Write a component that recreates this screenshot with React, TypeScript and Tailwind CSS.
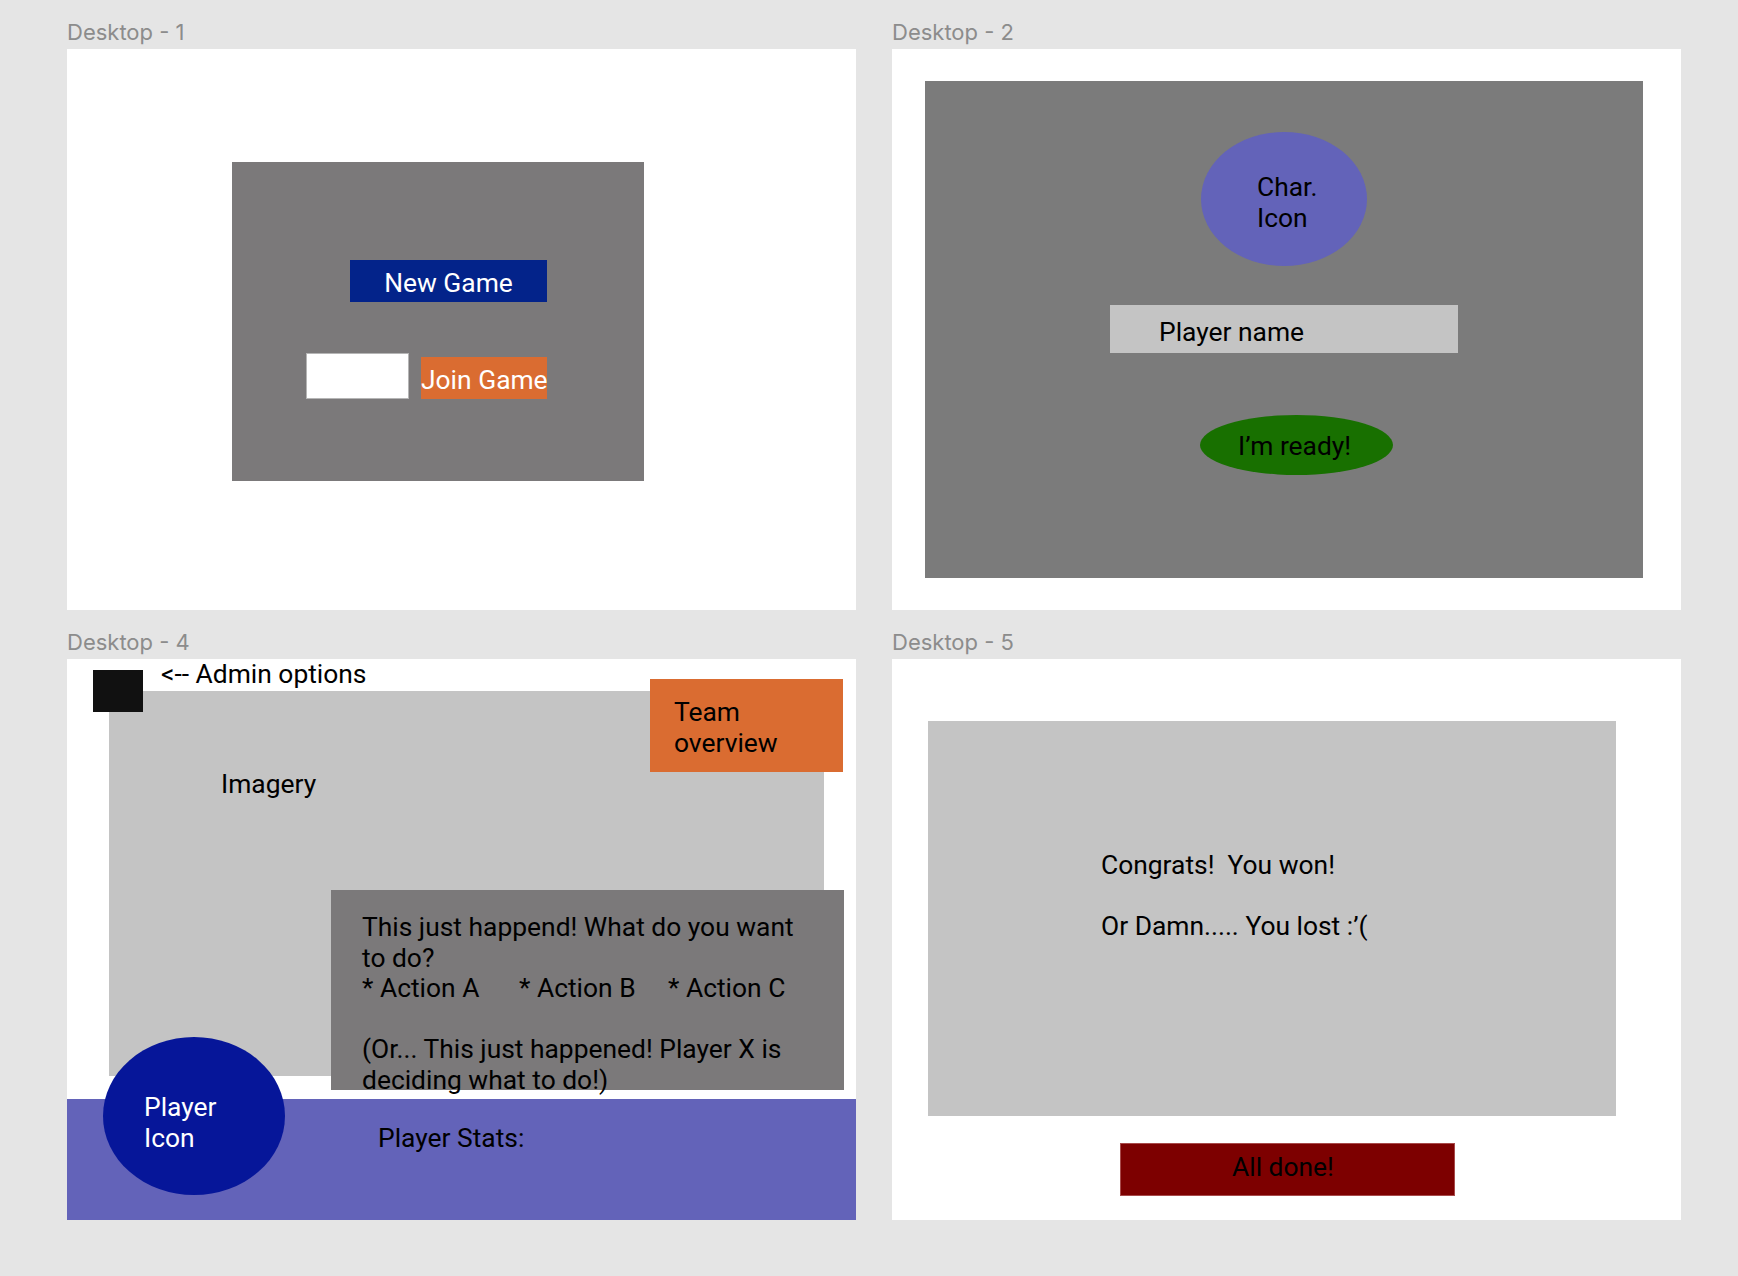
import React from "react";

const FrameLabel = ({ children }: { children: string }) => (
  <div className="h-[30px] text-[22px] leading-[26px] text-[#8c8c8c] [font-family:Inter,sans-serif]">
    {children}
  </div>
);

const StartScreen = () => (
  <div className="h-[561px] bg-white pl-[165px] pt-[113px]">
    <div className="flex h-[319px] w-[412px] flex-col bg-[#7b797a]">
      <div className="ml-[118px] mt-[98px] flex h-[42px] w-[197px] items-center justify-center bg-[#03238a] pt-[4px] text-white">
        New Game
      </div>
      <div className="ml-[74px] mt-[51px] flex items-end gap-[12px]">
        <div className="h-[46px] w-[103px] border border-[#b5b5b5] bg-white" />
        <div className="h-[42px] w-[126px] overflow-hidden whitespace-nowrap bg-[#da6c31] pt-[8px] text-white">
          Join Game
        </div>
      </div>
    </div>
  </div>
);

const CharacterScreen = () => (
  <div className="h-[561px] bg-white pl-[33px] pt-[32px]">
    <div className="flex h-[497px] w-[718px] flex-col bg-[#7b7b7b]">
      <div className="ml-[276px] mt-[51px] h-[134px] w-[166px] rounded-[50%] bg-[#6363b9] pl-[56px] pt-[40px]">
        Char.
        <br />
        Icon
      </div>
      <div className="ml-[185px] mt-[39px] h-[48px] w-[348px] bg-[#c4c4c4] pl-[49px] pt-[12px]">
        Player name
      </div>
      <div className="ml-[275px] mt-[62px] flex h-[60px] w-[193px] items-center rounded-[50%] bg-[#187000] pl-[38px] pt-[2px]">
        I’m ready!
      </div>
    </div>
  </div>
);

const GameScreen = () => (
  <div className="relative flex h-[561px] flex-col bg-white">
    <div className="ml-[42px] mt-[32px] h-[385px] w-[715px] bg-[#c4c4c4] pl-[112px] pt-[78px]">
      Imagery
    </div>
    <div className="mt-auto h-[121px] bg-[#6363b9] pl-[311px] pt-[24px]">
      Player Stats:
    </div>

    <div className="absolute left-[26px] top-0 flex items-start gap-[18px]">
      <div className="mt-[11px] h-[42px] w-[50px] bg-[#111111]" />
      <span className="whitespace-nowrap">&lt;-- Admin options</span>
    </div>

    <div className="absolute left-[583px] top-[20px] h-[93px] w-[193px] bg-[#da6c31] pl-[24px] pt-[18px]">
      Team
      <br />
      overview
    </div>

    <div className="absolute left-[264px] top-[231px] h-[200px] w-[513px] whitespace-nowrap bg-[#7b797a] pl-[31px] pt-[22px]">
      <div>This just happend! What do you want</div>
      <div>to do?</div>
      <div className="flex">
        <span className="w-[157px]">* Action A</span>
        <span className="w-[149px]">* Action B</span>
        <span>* Action C</span>
      </div>
      <div>&nbsp;</div>
      <div>(Or... This just happened! Player X is</div>
      <div>deciding what to do!)</div>
    </div>

    <div className="absolute left-[36px] top-[378px] h-[158px] w-[182px] rounded-[50%] bg-[#061699] pl-[41px] pt-[55px] text-white">
      Player
      <br />
      Icon
    </div>
  </div>
);

const ResultScreen = () => (
  <div className="flex h-[561px] flex-col bg-white pl-[36px] pt-[62px]">
    <div className="h-[395px] w-[688px] whitespace-pre bg-[#c4c4c4] pl-[173px] pt-[129px]">
      <div>Congrats!  You won!</div>
      <div>&nbsp;</div>
      <div>Or Damn..... You lost :’(</div>
    </div>
    <div className="ml-[192px] mt-[27px] h-[53px] w-[335px] border border-[#a84a4a] bg-[#7d0000] pl-[111px] pt-[8px]">
      All done!
    </div>
  </div>
);

export default function App() {
  return (
    <div className="min-h-screen bg-[#e5e5e5] pl-[67px] pt-[19px] text-[26.4px] leading-[30.6px] text-black [font-family:Roboto,sans-serif]">
      <div className="grid grid-cols-[789px_789px] gap-x-[36px] gap-y-[19px]">
        <div>
          <FrameLabel>Desktop - 1</FrameLabel>
          <StartScreen />
        </div>
        <div>
          <FrameLabel>Desktop - 2</FrameLabel>
          <CharacterScreen />
        </div>
        <div>
          <FrameLabel>Desktop - 4</FrameLabel>
          <GameScreen />
        </div>
        <div>
          <FrameLabel>Desktop - 5</FrameLabel>
          <ResultScreen />
        </div>
      </div>
    </div>
  );
}
